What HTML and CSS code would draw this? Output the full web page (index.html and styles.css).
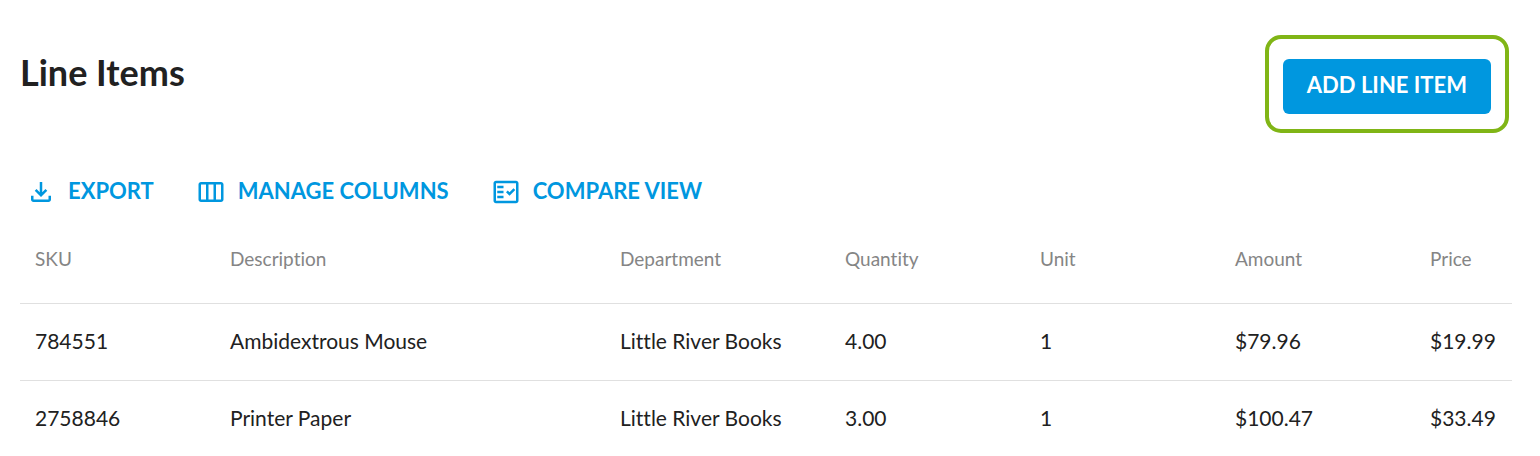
FILE: index.html
```html
<!DOCTYPE html>
<html lang="en">
<head>
    <meta charset="UTF-8">
    <meta name="viewport" content="width=device-width, initial-scale=1.0">
    <title>Line Items</title>
    <link rel="stylesheet" href="styles.css">
</head>
<body>
    <header class="page-header">
        <h1>Line Items</h1>
        <div class="highlight">
            <button type="button" class="btn-primary">ADD LINE ITEM</button>
        </div>
    </header>

    <div class="toolbar">
        <button type="button" class="btn-text">
            <svg class="icon" viewBox="0 0 24 24" aria-hidden="true">
                <path d="M18 15v3H6v-3H4v3c0 1.1.9 2 2 2h12c1.1 0 2-.9 2-2v-3h-2zm-1-4-1.41-1.41L13 12.17V4h-2v8.17L8.41 9.59 7 11l5 5 5-5z"/>
            </svg>
            EXPORT
        </button>
        <button type="button" class="btn-text">
            <svg class="icon" viewBox="0 0 24 24" aria-hidden="true">
                <path d="M20 4H4c-1.1 0-2 .9-2 2v12c0 1.1.9 2 2 2h16c1.1 0 2-.9 2-2V6c0-1.1-.9-2-2-2zM8 18H4V6h4v12zm6 0h-4V6h4v12zm6 0h-4V6h4v12z"/>
            </svg>
            MANAGE COLUMNS
        </button>
        <button type="button" class="btn-text">
            <svg class="icon" viewBox="0 0 24 24" aria-hidden="true">
                <path fill-rule="evenodd" d="M20 3H4c-1.1 0-2 .9-2 2v14c0 1.1.9 2 2 2h16c1.1 0 2-.9 2-2V5c0-1.1-.9-2-2-2zm0 16H4V5h16v14z"/>
                <path d="M19.41 10.42 17.99 9l-3.17 3.17-1.41-1.42L12 12.16 14.82 15zM5 7h5v2H5zM5 11h5v2H5zM5 15h5v2H5z"/>
            </svg>
            COMPARE VIEW
        </button>
    </div>

    <table class="items">
        <colgroup>
            <col class="col">
            <col class="col-description">
            <col class="col-department">
            <col class="col">
            <col class="col">
            <col class="col">
            <col>
        </colgroup>
        <thead>
            <tr>
                <th>SKU</th>
                <th>Description</th>
                <th>Department</th>
                <th>Quantity</th>
                <th>Unit</th>
                <th>Amount</th>
                <th>Price</th>
            </tr>
        </thead>
        <tbody>
            <tr>
                <td>784551</td>
                <td>Ambidextrous Mouse</td>
                <td>Little River Books</td>
                <td>4.00</td>
                <td>1</td>
                <td>$79.96</td>
                <td>$19.99</td>
            </tr>
            <tr>
                <td>2758846</td>
                <td>Printer Paper</td>
                <td>Little River Books</td>
                <td>3.00</td>
                <td>1</td>
                <td>$100.47</td>
                <td>$33.49</td>
            </tr>
        </tbody>
    </table>
</body>
</html>
```
FILE: styles.css
```css
* {
    box-sizing: border-box;
}

body {
    font-family: Lato, "Liberation Sans", sans-serif;
    font-size: 21px;
    font-variant-ligatures: none;
    line-height: 28px;
    color: #212121;
    background-color: #fff;
    margin: 0;
    padding: 35px 28px 0 20px;
}

button {
    font-family: inherit;
    font-size: 22px;
    font-weight: 700;
    line-height: 28px;
    border: 0;
    cursor: pointer;
}

.page-header {
    display: flex;
    justify-content: space-between;
    align-items: flex-start;
    padding-right: 3px;
}

h1 {
    font-size: 36px;
    font-weight: 700;
    line-height: 44px;
    margin: 15px 0 0;
}

.highlight {
    border: 4px solid #80b516;
    border-radius: 16px;
    padding: 20px 14px 15px;
}

.btn-primary {
    display: block;
    color: #fff;
    background-color: #0097df;
    border-radius: 6px;
    padding: 12px 24px 15px;
}

.toolbar {
    display: flex;
    gap: 42px;
    margin-top: 44px;
    padding-left: 6px;
}

.btn-text {
    display: flex;
    align-items: flex-start;
    gap: 12px;
    color: #0097df;
    background: none;
    padding: 0;
}

.icon {
    width: 30px;
    height: 30px;
    fill: currentColor;
}

.items {
    width: 100%;
    table-layout: fixed;
    border-collapse: collapse;
    margin-top: 9px;
}

.col {
    width: 195px;
}

.col-description {
    width: 390px;
}

.col-department {
    width: 225px;
}

th, td {
    text-align: left;
    white-space: nowrap;
    padding: 23px 0 25px 15px;
}

th {
    height: 87px;
    font-size: 19px;
    font-weight: 400;
    color: #858585;
    padding-bottom: 23px;
}

tbody tr {
    border-top: 1px solid #e0e0e0;
}
```
